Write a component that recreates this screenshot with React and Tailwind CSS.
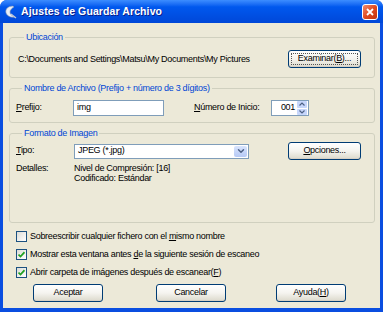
import { ChevronDown } from 'lucide-react';

const Btn = ({ children, focused, className = '' }) => (
    <button
        className={`h-[18px] rounded-[3px] border border-[#003c74] bg-gradient-to-b from-white via-[#f5f4ef] to-[#dcd9cc] text-black shadow-[inset_0_-1px_0_#d6d0c5] flex items-center justify-center ${className}`}
    >
        {focused ? (
            <span className="flex items-center justify-center w-[calc(100%-4px)] h-[calc(100%-4px)] border border-dotted border-[#555]">{children}</span>
        ) : (
            children
        )}
    </button>
);

const Check = ({ checked }) => (
    <span className="w-[11px] h-[11px] border border-[#1c5180] bg-gradient-to-br from-[#dcdcd7] to-white flex items-center justify-center shrink-0">
        {checked && (
            <svg width="7" height="7" viewBox="0 0 7 7">
                <path d="M0.5 3.5 L2.5 5.5 L6.5 1.2" stroke="#21a121" strokeWidth="1.7" fill="none" />
            </svg>
        )}
    </span>
);

const Group = ({ title, children, className = '' }) => (
    <fieldset className={`border border-[#d0d0bf] rounded-[3px] ${className}`}>
        <legend className="ml-[6px] px-[2px] text-[#0046d5] leading-[12px]">{title}</legend>
        {children}
    </fieldset>
);

export default function App() {
    return (
        <div className="w-[383px] h-[312px] bg-[#0a4ee0] rounded-t-[7px] flex flex-col font-['Liberation_Sans',Arial,sans-serif] text-[9px] tracking-[-0.3px] text-black overflow-hidden">
            {/* Title bar */}
            <div className="h-[23px] shrink-0 flex items-center pl-[4px] pr-[5px] bg-gradient-to-b from-[#3c8dff] via-[#0058ee] via-30% to-[#0047d8]">
                <svg width="13" height="14" viewBox="0 0 13 14" className="shrink-0">
                    <path d="M9 1 C4 1 1 4 2 8 C3 11 7 13 11 12 C8 11 6 9 6 7 C6 5 8 3 10 2 Z" fill="#e8eef8" stroke="#7c8fb0" strokeWidth="0.6" />
                    <path d="M7 9 L12 13" stroke="#c0c8d8" strokeWidth="1.2" />
                </svg>
                <span className="ml-[4px] text-white font-bold text-[10.5px] tracking-[0.1px] [text-shadow:1px_1px_0_#0a1e8a]">Ajustes de Guardar Archivo</span>
                <div className="ml-auto w-[16px] h-[16px] rounded-[3px] border border-white bg-gradient-to-br from-[#f08a6a] via-[#e04a20] to-[#c0330e] flex items-center justify-center">
                    <svg width="8" height="8" viewBox="0 0 8 8">
                        <path d="M1 1 L7 7 M7 1 L1 7" stroke="white" strokeWidth="1.8" />
                    </svg>
                </div>
            </div>

            {/* Body */}
            <div className="flex-1 mx-[3px] mb-[4px] bg-[#ece9d8] pl-[6px] pr-[5px] flex flex-col">
                <Group title="Ubicación" className="mt-[8px] pl-[8px] pr-[13px] pt-[7px] pb-[9px]">
                    <div className="flex items-center justify-between">
                        <span className="pt-[2px]">C:\Documents and Settings\Matsu\My Documents\My Pictures</span>
                        <Btn focused className="w-[73px]">
                            <span>Examinar(<u>B</u>)...</span>
                        </Btn>
                    </div>
                </Group>

                <Group title="Nombre de Archivo (Prefijo + número de 3 dígitos)" className="mt-[4px] pl-[6px] pr-[13px] pt-[6px] pb-[6px]">
                    <div className="flex items-center">
                        <span className="w-[57px]"><u>P</u>refijo:</span>
                        <div className="w-[91px] h-[16px] border border-[#7f9db9] bg-white px-[3px] flex items-center">img</div>
                        <span className="ml-[30px] w-[77px]"><u>N</u>úmero de Inicio:</span>
                        <div className="w-[38px] h-[16px] border border-[#7f9db9] bg-white flex items-center justify-between pl-[3px]">
                            <span className="ml-auto mr-[2px]">001</span>
                            <div className="w-[10px] h-[14px] mr-[1px] flex flex-col gap-[1px]">
                                <div className="flex-1 rounded-[1px] bg-[#c6d6fb] flex items-center justify-center">
                                    <svg width="6" height="4" viewBox="0 0 6 4"><path d="M0.5 3.5 L3 1 L5.5 3.5" stroke="#4d6185" strokeWidth="1.2" fill="none" /></svg>
                                </div>
                                <div className="flex-1 rounded-[1px] bg-[#c6d6fb] flex items-center justify-center">
                                    <svg width="6" height="4" viewBox="0 0 6 4"><path d="M0.5 0.5 L3 3 L5.5 0.5" stroke="#4d6185" strokeWidth="1.2" fill="none" /></svg>
                                </div>
                            </div>
                        </div>
                    </div>
                </Group>

                <Group title="Formato de Imagen" className="mt-[4px] h-[96px] pl-[6px] pr-[13px] pt-[3px]">
                    <div className="flex items-center">
                        <span className="w-[58px]"><u>T</u>ipo:</span>
                        <div className="w-[175px] h-[15px] border border-[#7f9db9] bg-white flex items-center pl-[3px]">
                            <span>JPEG (*.jpg)</span>
                            <div className="ml-auto mr-[1px] w-[13px] h-[11px] rounded-[2px] bg-gradient-to-b from-[#d8e4fd] to-[#b6c9f5] flex items-center justify-center">
                                <ChevronDown size={10} strokeWidth={3.5} color="#4d6185" />
                            </div>
                        </div>
                        <Btn className="ml-auto w-[73px]">
                            <span><u>O</u>pciones...</span>
                        </Btn>
                    </div>
                    <div className="flex mt-[3px] leading-[10px]">
                        <span className="w-[58px]">Detalles:</span>
                        <div className="flex flex-col">
                            <span>Nivel de Compresión: [16]</span>
                            <span>Codificado: Estándar</span>
                        </div>
                    </div>
                </Group>

                <div className="mt-[8px] pl-[7px] flex flex-col gap-[7px]">
                    <label className="flex items-center gap-[3px] h-[11px]">
                        <Check />
                        <span>Sobreescribir cualquier fichero con el <u>m</u>ismo nombre</span>
                    </label>
                    <label className="flex items-center gap-[3px] h-[11px]">
                        <Check checked />
                        <span>Mostrar esta ventana antes <u>d</u>e la siguiente sesión de escaneo</span>
                    </label>
                    <label className="flex items-center gap-[3px] h-[11px]">
                        <Check checked />
                        <span>Abrir carpeta de imágenes después de escanear(<u>F</u>)</span>
                    </label>
                </div>

                <div className="mt-auto mb-[6px] flex pl-[24px]">
                    <Btn className="w-[70px]">Aceptar</Btn>
                    <Btn className="ml-[53px] w-[70px]">Cancelar</Btn>
                    <Btn className="ml-[50px] w-[70px]">
                        <span>Ayuda(<u>H</u>)</span>
                    </Btn>
                </div>
            </div>
        </div>
    );
}
